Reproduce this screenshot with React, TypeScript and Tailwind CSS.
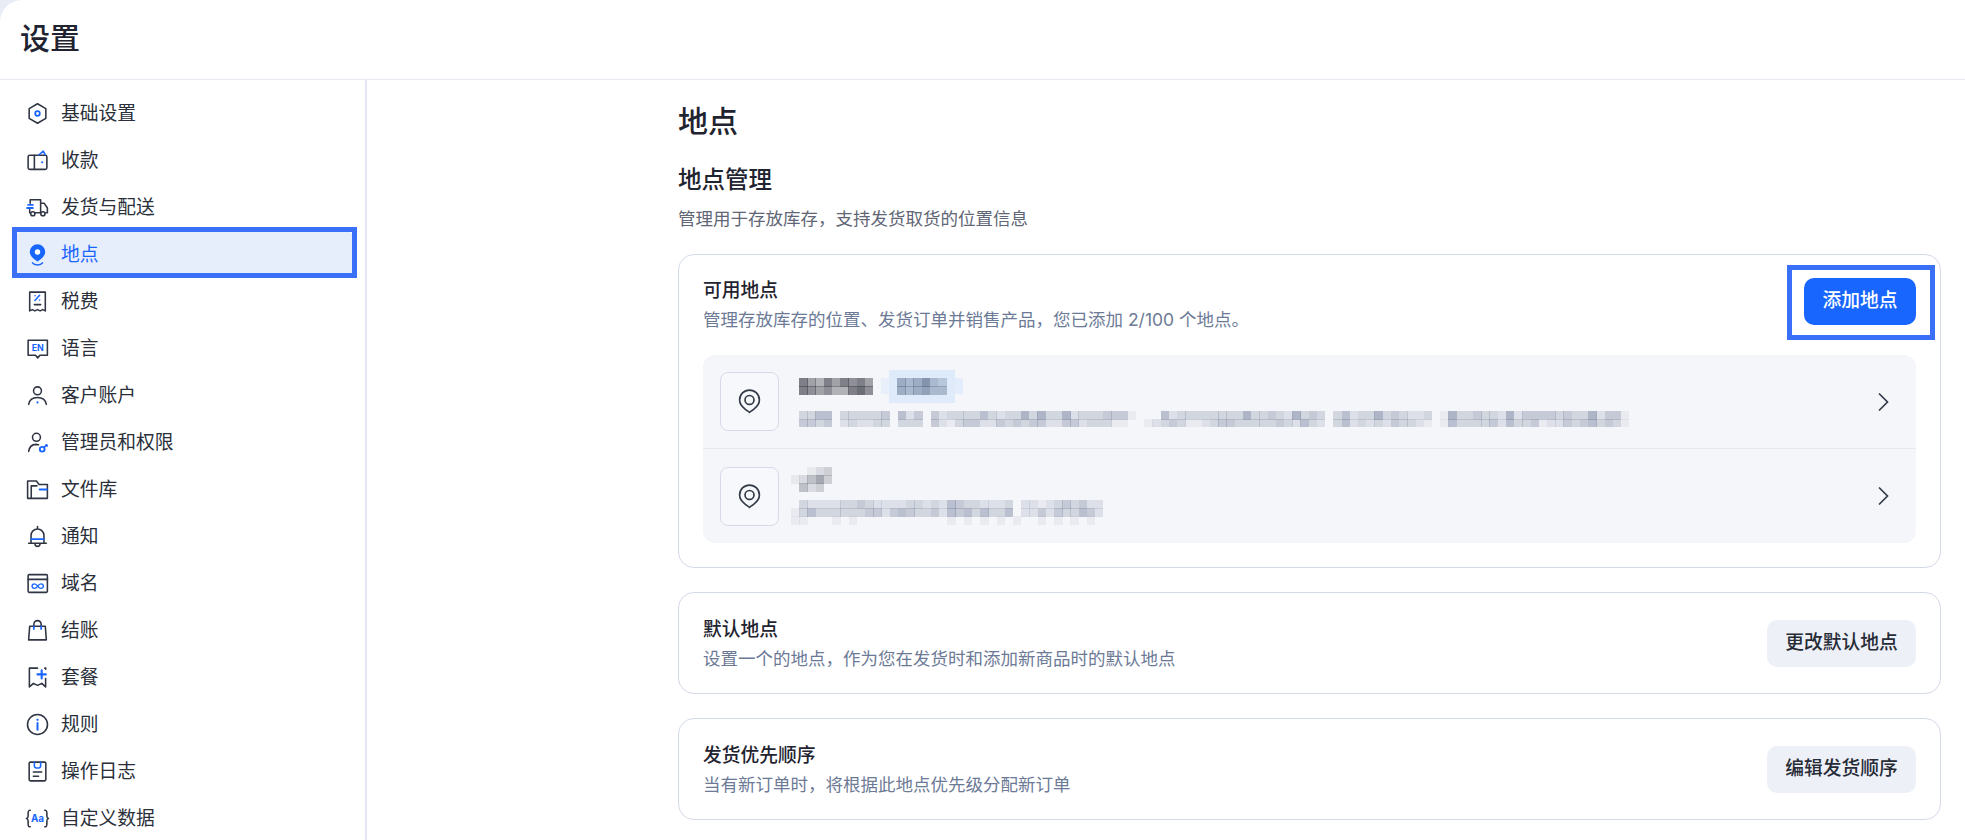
import React from "react";

const D = "#2f3542";
const B = "#1966ff";

type IP = { children: React.ReactNode };
const Ico = ({ children }: IP) => (
  <svg width="25" height="25" viewBox="0 0 24 24" fill="none" stroke={D} strokeWidth="1.5" strokeLinecap="round" strokeLinejoin="round" className="shrink-0">
    {children}
  </svg>
);

const icons: Record<string, React.ReactNode> = {
  hex: (
    <>
      <path d="M12 2.6l8 4.7v9.4l-8 4.7-8-4.7V7.3z" />
      <circle cx="12" cy="12" r="2.2" stroke={B} strokeWidth="1.7" />
    </>
  ),
  wallet: (
    <>
      <rect x="3" y="7" width="18" height="13.5" rx="1.6" />
      <path d="M9 7v13.5" />
      <path d="M13.5 6.5L17.5 3l2 3.5" stroke={B} />
      <circle cx="16.5" cy="13.6" r="1" fill={B} stroke="none" />
    </>
  ),
  truck: (
    <>
      <path d="M5 4.500h10v12.500H10M5 8V4.500M15 8h3.500l3 4.500v4.500h-1.500M15 17h-.5M4.500 14v3h.5" />
      <circle cx="7.500" cy="18" r="2" />
      <circle cx="17.200" cy="18" r="2" />
      <path d="M3 9.500h4.500M2 12.500h5.500" stroke={B} strokeWidth="1.800" />
    </>
  ),
  pin: (
    <>
      <path d="M12 2.200a7.400 7.400 0 0 0-7.400 7.400c0 3.900 4 6.800 7.400 9.200 3.400-2.400 7.400-5.300 7.400-9.200A7.400 7.400 0 0 0 12 2.200z" fill={B} stroke="none" />
      <circle cx="12" cy="9.600" r="2.600" fill="#fff" stroke="none" />
      <path d="M7.200 20c1 1.400 2.800 2 4.800 2s3.800-.6 4.800-2" stroke={B} />
    </>
  ),
  receipt: (
    <>
      <path d="M4.500 3h15v18l-2.500-1.200-2.500 1.200-2.500-1.200-2.500 1.200-2.500-1.200-2.500 1.200z" />
      <path d="M9.500 11l4.500-5M9.600 6.400h.1M14 10.600h.1" stroke={B} strokeWidth="1.500" />
      <path d="M9 15h6" />
    </>
  ),
  lang: (
    <>
      <path d="M3 4h18.500v14.500h-7.200L12.200 21l-2.100-2.500H3z" />
      <text x="12.200" y="14.300" textAnchor="middle" fontSize="8.500" fontWeight="700" fill={B} stroke="none" fontFamily="Inter, sans-serif">EN</text>
    </>
  ),
  user: (
    <>
      <circle cx="12" cy="7.500" r="3.800" />
      <path d="M3.500 20.500c.8-4.200 4-6.500 8.500-6.500s7.700 2.300 8.500 6.500" />
      <circle cx="12" cy="18.600" r="1" fill={B} stroke="none" />
    </>
  ),
  admin: (
    <>
      <circle cx="11" cy="7" r="3.800" />
      <path d="M3.500 20.500c.6-4.200 3.300-6.500 7-6.700 1 0 1.800.1 2.500.3" />
      <circle cx="16.500" cy="18.500" r="2.300" stroke={B} strokeWidth="1.800" />
      <path d="M18.300 16.700l2.500-2.500M20.300 14.300l1 1" stroke={B} strokeWidth="1.600" />
    </>
  ),
  folder: (
    <>
      <path d="M2.500 20.500V3.800h8.500l2.500 3.400h8v13.300z" />
      <path d="M6 20.500V8.500h5.500" />
      <path d="M14 12h7" stroke={B} strokeWidth="1.700" />
    </>
  ),
  bell: (
    <>
      <path d="M12 2.500v1.500M5.800 18.500v-7.500a6.200 6.200 0 0 1 12.400 0v7.500M3.500 18.500h17" />
      <path d="M9.500 19c.3 1.600 1.300 2.500 2.500 2.500s2.200-.9 2.500-2.500" />
      <path d="M5.800 14.500h12.400" stroke={B} strokeWidth="1.800" />
    </>
  ),
  domain: (
    <>
      <rect x="3" y="3.500" width="18.500" height="17" rx="1" />
      <path d="M3 8h18.500" strokeWidth="1.800" />
      <path d="M12.200 14.500c-1-1.500-2-2.200-3.200-2.200a2.200 2.200 0 0 0 0 4.400c1.200 0 2.200-.7 3.200-2.200zm0 0c1-1.500 2-2.200 3.200-2.200a2.200 2.200 0 0 1 0 4.400c-1.200 0-2.200-.7-3.200-2.200z" stroke={B} strokeWidth="1.300" />
    </>
  ),
  bag: (
    <>
      <path d="M4.500 8h15l1 13h-17z" />
      <path d="M8.500 8V6a3.500 3.500 0 0 1 7 0v2" />
      <path d="M8.500 8v2.500M15.500 8v2.500" stroke={B} strokeWidth="1.700" />
    </>
  ),
  plan: (
    <>
      <path d="M12 3H4.200v18l3.900-3.400 4 2 4-2 3.700 3.400V13" />
      <path d="M16 5v8M12 9h8" stroke={B} strokeWidth="2" />
      <path d="M19 3h.9v1" />
    </>
  ),
  info: (
    <>
      <circle cx="12" cy="12" r="9.600" />
      <path d="M12 10.500v6.500" stroke={B} strokeWidth="1.900" />
      <circle cx="12" cy="7.500" r="1.100" fill={B} stroke="none" />
    </>
  ),
  doc: (
    <>
      <rect x="4" y="3" width="16" height="18" rx="1.200" />
      <path d="M9 3v3.800a1.800 1.800 0 0 0 1.800 1.800h2.400A1.800 1.800 0 0 0 15 6.800V3" stroke={B} />
      <path d="M8 12.500h8M8 16.500h5" />
    </>
  ),
  data: (
    <>
      <path d="M5 4C3 4 3 5 3 7v2.500c0 1.500-.5 2.200-1.500 2.500 1 .3 1.500 1 1.500 2.500V17c0 2 0 3 2 3" />
      <path d="M19 4c2 0 2 1 2 3v2.500c0 1.500.5 2.200 1.500 2.500-1 .3-1.500 1-1.500 2.500V17c0 2 0 3-2 3" />
      <text x="12" y="15" textAnchor="middle" fontSize="9.500" fontWeight="700" fill={B} stroke="none" fontFamily="Inter, sans-serif">Aa</text>
    </>
  ),
};

const nav: [string, string][] = [
  ["hex", "基础设置"],
  ["wallet", "收款"],
  ["truck", "发货与配送"],
  ["pin", "地点"],
  ["receipt", "税费"],
  ["lang", "语言"],
  ["user", "客户账户"],
  ["admin", "管理员和权限"],
  ["folder", "文件库"],
  ["bell", "通知"],
  ["domain", "域名"],
  ["bag", "结账"],
  ["plan", "套餐"],
  ["info", "规则"],
  ["doc", "操作日志"],
  ["data", "自定义数据"],
];

/* Pixelated (redacted) text in the reference: one character = one cell, 0-9 = strength. */
const Mosaic = ({ rows, color, cell = 8.22 }: { rows: string[]; color: string; cell?: number }) => {
  const w = Math.max(...rows.map((r) => r.length));
  return (
    <svg width={w * cell} height={rows.length * cell} className="block shrink-0" shapeRendering="crispEdges">
      {rows.map((r, y) =>
        r.split("").map((c, x) =>
          c === " " ? null : (
            <rect key={`${x}-${y}`} x={x * cell} y={y * cell} width={cell + 0.3} height={cell + 0.3} fill={color} opacity={Number(c) * 0.1} />
          ),
        ),
      )}
    </svg>
  );
};

const LocIcon = () => (
  <div className="flex h-[59px] w-[59px] shrink-0 items-center justify-center rounded-[8px] border border-[#d5dae8] bg-[#f7f8fb]">
    <svg width="25" height="25" viewBox="0 0 24 24" fill="none" stroke="#333a47" strokeWidth="1.600" strokeLinejoin="round">
      <path d="M12 22.500c-1-1-2.500-1.800-4.500-3.500C5 17 2.500 14.500 2.500 10.500a9.500 9.500 0 0 1 19 0c0 4-2.500 6.500-5 8.500-2 1.700-3.500 2.500-4.500 3.500z" />
      <circle cx="12" cy="10.500" r="4.300" />
    </svg>
  </div>
);

const Chevron = () => (
  <svg width="12" height="20" viewBox="0 0 12 20" fill="none" stroke="#333a47" strokeWidth="1.700" className="shrink-0">
    <path d="M2 1.500l8.500 8.500L2 18.500" />
  </svg>
);

const Card = ({ title, sub, btn }: { title: string; sub: string; btn: string }) => (
  <section className="flex h-[102px] items-center justify-between rounded-[16px] border border-[#d5dae8] bg-white px-[24px]">
    <div className="pt-[3px]">
      <div className="text-[18.750px] font-medium leading-[28px] text-[#1f2430]">{title}</div>
      <div className="mt-[1px] text-[17.500px] leading-[28px] text-[#6c7a96]">{sub}</div>
    </div>
    <button className="h-[47px] w-[149px] rounded-[10px] bg-[#edf0f7] text-[18.750px] font-medium text-[#262b36]">{btn}</button>
  </section>
);

export default function App() {
  return (
    <div className="h-[840px] w-[1965px] overflow-hidden bg-[#e9ebf5] font-['Inter','Noto_Sans_CJK_SC',sans-serif]">
      <div className="flex h-full flex-col rounded-tl-[22px] bg-white">
        <header className="flex h-[80px] shrink-0 items-center border-b border-[#e8eaf1] pl-[20px] pb-[4px]">
          <h1 className="text-[30px] font-medium leading-[40px] text-[#1f2430]">设置</h1>
        </header>
        <div className="flex min-h-0 flex-1">
          <aside className="h-full w-[367px] shrink-0 border-r-2 border-[#e3e6f2] pr-[8px] pl-[12px] pt-[10px]">
            {nav.map(([ic, label]) => {
              const active = label === "地点";
              return (
                <div
                  key={label}
                  className={
                    active
                      ? "relative flex h-[47px] items-center gap-[11px] rounded-[12px] bg-[#e6edfb] pl-[13px] text-[18.750px] text-[#1966ff]"
                      : "relative flex h-[47px] items-center gap-[11px] pl-[13px] text-[18.750px] text-[#2a2f3a]"
                  }
                >
                  <Ico>{icons[ic]}</Ico>
                  <span className="pt-[1px] leading-[28px]">{label}</span>
                  {active && <div className="absolute inset-x-0 top-[-4px] bottom-0 border-[5px] border-[#3a6ff7]" />}
                </div>
              );
            })}
          </aside>
          <main className="min-w-0 flex-1 pl-[311px] pr-[24px]">
            <h2 className="mt-[21px] text-[30px] font-medium leading-[40px] text-[#1f2430]">地点</h2>
            <h3 className="mt-[22px] text-[23.500px] font-medium leading-[34px] text-[#1f2430]">地点管理</h3>
            <p className="mt-[8px] text-[17.500px] leading-[28px] text-[#5f6675]">{"管理用于存放库存\uFF0C支持发货取货的位置信息"}</p>
            <section className="mt-[21px] rounded-[16px] border border-[#d5dae8] bg-white px-[24px] pt-[23px] pb-[24px]">
              <div className="flex h-[47px] items-start justify-between">
                <div className="-mt-[1px]">
                  <div className="text-[18.750px] font-medium leading-[28px] text-[#1f2430]">可用地点</div>
                  <div className="mt-[1px] text-[17.500px] leading-[28px] text-[#6c7a96]">{"管理存放库存的位置、发货订单并销售产品\uFF0C您已添加 2/100 个地点。"}</div>
                </div>
                <div className="relative">
                  <button className="h-[47px] w-[112px] rounded-[10px] bg-[#1966ff] text-[18.750px] font-medium text-white">添加地点</button>
                  <div className="absolute top-[-13px] bottom-[-15px] left-[-17px] right-[-19px] border-[5px] border-[#3a6ff7]" />
                </div>
              </div>
              <div className="mt-[30px] overflow-hidden rounded-[12px] bg-[#f5f6fa]">
                <div className="flex h-[94px] items-center border-b border-[#e5e8f0] pl-[17px] pr-[27px]">
                  <LocIcon />
                  <div className="ml-[20px] min-w-0 flex-1 pb-[6px]">
                    <div className="flex items-center">
                      <Mosaic color="#4b4d55" rows={["754757675", "765644786"]} />
                      <div className="ml-[8px] h-[16px] w-[8px] bg-[#e9f0fb]" />
                      <div className="flex h-[33px] w-[66px] items-center justify-center bg-[#dfebfb]">
                        <Mosaic color="#5c6f8c" rows={["545743", "545644"]} />
                      </div>
                      <div className="h-[16px] w-[8px] bg-[#e3edfb]" />
                    </div>
                    <div className="mt-[8px]">
                      <Mosaic
                        color="#7f8aa3"
                        rows={[
                          "3355" + " " + "333334" + " " + "524" + " " + "42333353233636336233344410" + "  " + "52333333336334326343" + " " + "352336343223" + " " + "16334332" + "624444343362441",
                          "4434" + " " + "232233" + " " + "333" + " " + "42134422434344224423331100" + "12" + "34311234433333432532" + " " + "352323243321" + " " + "15333342" + "533412243453431",
                        ]}
                      />
                    </div>
                  </div>
                  <Chevron />
                </div>
                <div className="flex h-[94px] items-center pl-[17px] pr-[27px]">
                  <LocIcon />
                  <div className="ml-[12px] min-w-0 flex-1">
                    <Mosaic color="#6f7480" rows={["  123", "12463", " 423"]} />
                    <div className="mt-[8px]">
                      <Mosaic
                        color="#7f8aa3"
                        rows={[
                          " 32222334322223323254332223 2212343422",
                          "135333333442454334254535335 2242433542",
                          "11   1 1           1 1 1 1 1  1 1 1 1 ",
                        ]}
                      />
                    </div>
                  </div>
                  <Chevron />
                </div>
              </div>
            </section>
            <div className="mt-[24px] flex flex-col gap-[24px]">
              <Card title="默认地点" sub={"设置一个的地点\uFF0C作为您在发货时和添加新商品时的默认地点"} btn="更改默认地点" />
              <Card title="发货优先顺序" sub={"当有新订单时\uFF0C将根据此地点优先级分配新订单"} btn="编辑发货顺序" />
            </div>
          </main>
        </div>
      </div>
    </div>
  );
}
